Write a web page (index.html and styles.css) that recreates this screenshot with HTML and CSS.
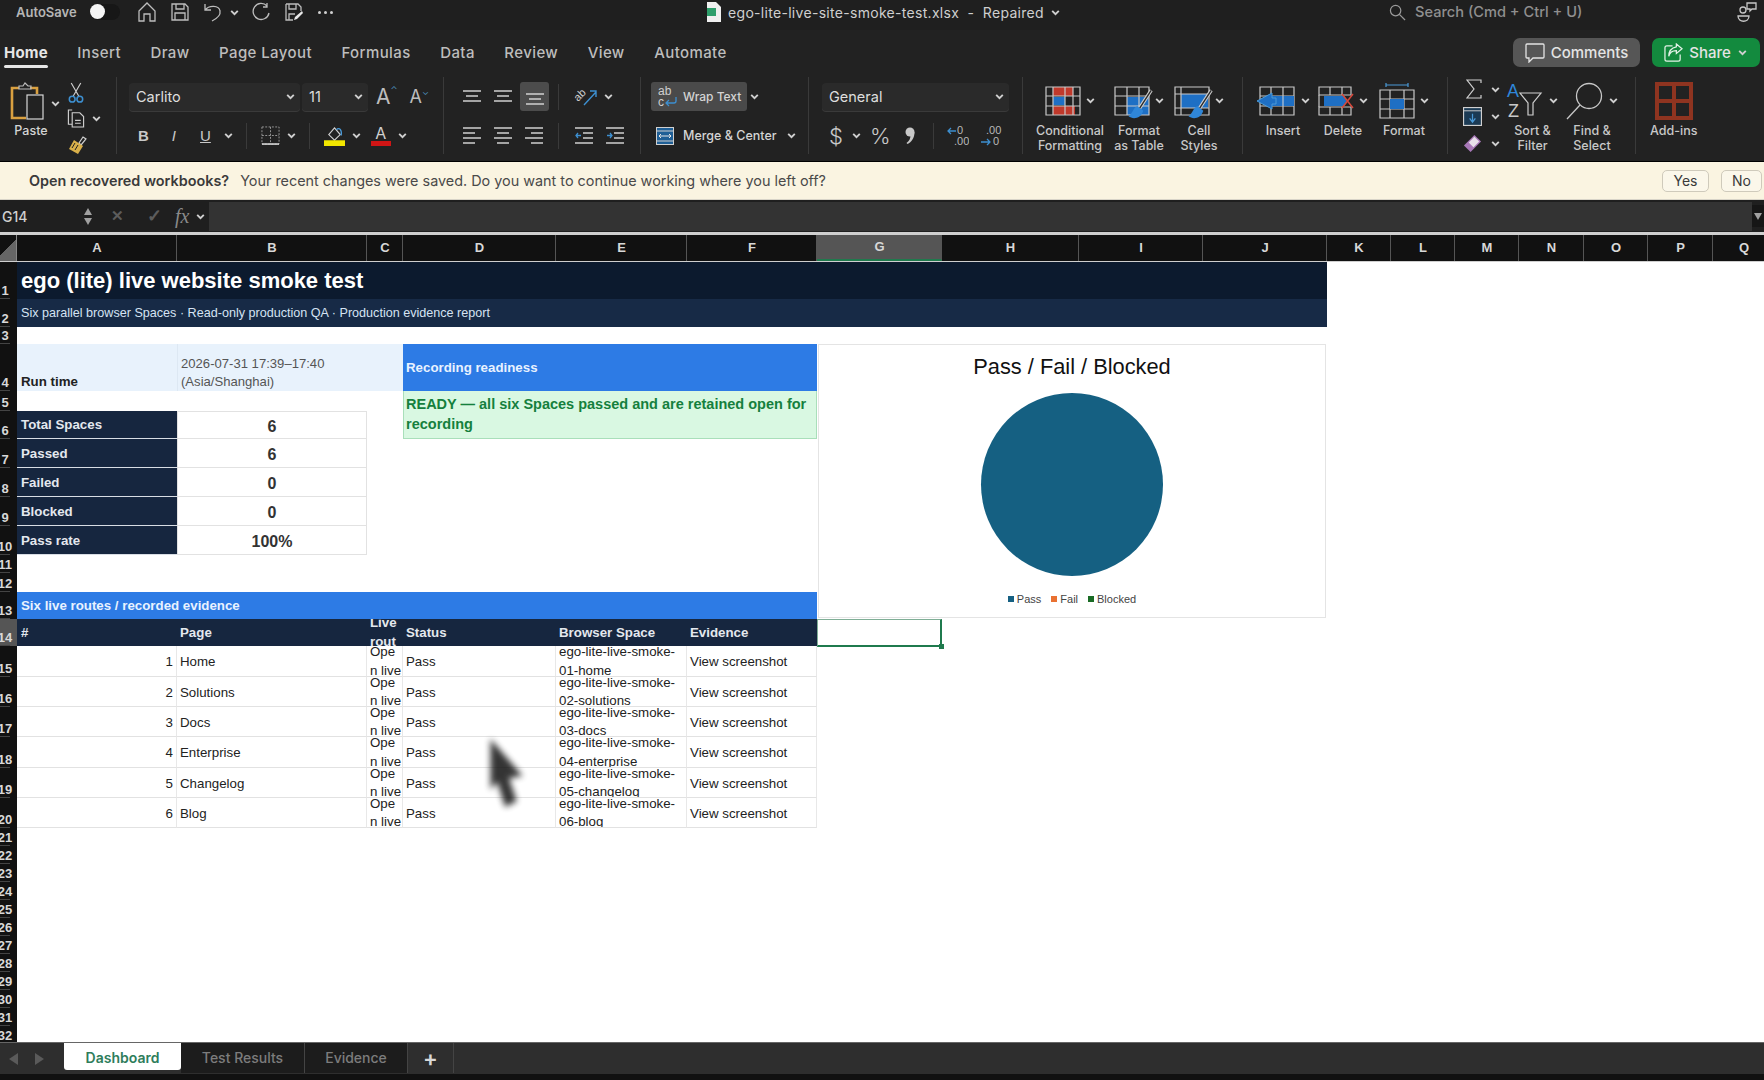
FILE: index.html
```html
<!DOCTYPE html>
<html>
<head>
    <title>ego-lite-live-site-smoke-test.xlsx</title>
    <link rel="stylesheet" href="styles.css">
</head>
<body>

    <svg class="sprite">
        <symbol id="chev" viewBox="0 0 10 10"><path d="M2 3.5 5 6.5 8 3.5" fill="none" stroke="#d0d0d0" stroke-width="1.7"/></symbol>
        <symbol id="lines-top" viewBox="0 0 18 14"><path d="M0 1h18M3 6h12M0 11h18" fill="none" stroke="#cfcfcf" stroke-width="1.3"/></symbol>
        <symbol id="lines-left" viewBox="0 0 18 18"><path d="M0 1h18M0 6h12M0 11h18M0 16h12" fill="none" stroke="#cfcfcf" stroke-width="1.3"/></symbol>
        <symbol id="lines-mid" viewBox="0 0 18 18"><path d="M0 1h18M3 6h12M0 11h18M3 16h12" fill="none" stroke="#cfcfcf" stroke-width="1.3"/></symbol>
        <symbol id="lines-right" viewBox="0 0 18 18"><path d="M0 1h18M6 6h12M0 11h18M6 16h12" fill="none" stroke="#cfcfcf" stroke-width="1.3"/></symbol>
        <symbol id="brush" viewBox="0 0 22 30"><path d="M20 2 9 19" fill="none" stroke="#cfcfcf" stroke-width="3"/><path d="M20 2 9 19" fill="none" stroke="#2a2a2a" stroke-width="1.2"/><path d="M8 16c-4 1-4 6-8 9 4 3 11 2 13-5z" fill="#2f86d8"/></symbol>
    </svg>

    <!-- Barra de titulo -->
    <div id="titlebar">
        <div class="tb-left">
            <span class="autosave">AutoSave</span>
            <span class="toggle"><i></i></span>
            <svg class="qa" viewBox="0 0 18 20"><path d="M1 9 9 1l8 8v10h-5v-7H6v7H1z" fill="none" stroke="#bdbdbd" stroke-width="1.3"/></svg>
            <svg class="qa" viewBox="0 0 18 20"><path d="M1 2h13l3 3v13H1zM5 2v5h8V2M4 18v-7h10v7" fill="none" stroke="#bdbdbd" stroke-width="1.3"/></svg>
            <svg class="qa" viewBox="0 0 18 20"><path d="M1 2v6h6M1 8c4-5 14-5 15 1 1 5-4 8-8 10" fill="none" stroke="#bdbdbd" stroke-width="1.3"/></svg>
            <svg class="chev tight"><use href="#chev"/></svg>
            <svg class="qa" viewBox="0 0 18 20"><path d="M15 4A8 8 0 1 0 17 11M15 1v4h-4" fill="none" stroke="#bdbdbd" stroke-width="1.3"/></svg>
            <svg class="qa" viewBox="0 0 18 20"><path d="M1 2h12l3 3v4M8 18H1V2M4 2v5h7V2M4 18v-6h6" fill="none" stroke="#bdbdbd" stroke-width="1.3"/><path d="m9 18 1-3 7-6 1 2-6 6z" fill="#e8e8e8"/></svg>
            <span class="dots"><i></i><i></i><i></i></span>
        </div>
        <div class="doc-title">
            <svg viewBox="0 0 16 20"><path d="M1 0h9l5 5v15H1z" fill="#efefef"/><rect x="1" y="6" width="9" height="8" fill="#2e9e6b"/></svg>
            <span>ego-lite-live-site-smoke-test.xlsx&nbsp; - &nbsp;Repaired</span>
            <svg class="chev"><use href="#chev"/></svg>
        </div>
        <div class="tb-right">
            <div class="search">
                <svg viewBox="0 0 18 18"><circle cx="7" cy="7" r="5.5" fill="none" stroke="#9a9a9a" stroke-width="1.3"/><path d="m11 11 6 6" stroke="#9a9a9a" stroke-width="1.3"/></svg>
                <span>Search (Cmd + Ctrl + U)</span>
            </div>
            <svg class="people" viewBox="0 0 20 22"><circle cx="6" cy="9" r="3" fill="none" stroke="#c8c8c8" stroke-width="1.3"/><path d="M1 15h11c0 7-11 7-11 0z" fill="none" stroke="#c8c8c8" stroke-width="1.3"/><path d="M10 2h9v6h-4l-2 2V8h-3z" fill="none" stroke="#c8c8c8" stroke-width="1.3"/></svg>
        </div>
    </div>

    <!-- Pestañas -->
    <div id="tabs">
        <ul>
            <li class="active">Home</li>
            <li>Insert</li>
            <li>Draw</li>
            <li>Page Layout</li>
            <li>Formulas</li>
            <li>Data</li>
            <li>Review</li>
            <li>View</li>
            <li>Automate</li>
        </ul>
        <div class="tab-actions">
            <button class="btn-comments">
                <svg viewBox="0 0 20 20"><path d="M2 1h16a1 1 0 0 1 1 1v12a1 1 0 0 1-1 1H8l-4 4v-4H2a1 1 0 0 1-1-1V2a1 1 0 0 1 1-1z" fill="none" stroke="#e4e4e4" stroke-width="1.3"/></svg>
                Comments
            </button>
            <button class="btn-share">
                <svg viewBox="0 0 20 20"><path d="M9 3H3a2 2 0 0 0-2 2v12a2 2 0 0 0 2 2h12a2 2 0 0 0 2-2v-5" fill="none" stroke="#e4f2e8" stroke-width="1.3"/><path d="M13 1l6 5-6 5V8C9 8 6 10 5 14c0-6 3-9 8-10z" fill="none" stroke="#e4f2e8" stroke-width="1.3"/></svg>
                Share
                <svg class="chev"><use href="#chev"/></svg>
            </button>
        </div>
    </div>

    <!-- Cinta -->
    <div id="ribbon">
        <div class="grp g-clip">
            <div class="paste">
                <svg viewBox="0 0 34 38"><path d="M9 6H2v30h14" fill="none" stroke="#d9a040" stroke-width="2.6"/><path d="M20 6h7v6" fill="none" stroke="#d9a040" stroke-width="2.6"/><path d="M9 7V4h4l2-3 3 3h3v3z" fill="none" stroke="#bdbdbd" stroke-width="1.2"/><rect x="17" y="13" width="16" height="24" fill="#222" stroke="#d8d8d8" stroke-width="1.2"/></svg>
                <span>Paste</span>
            </div>
            <svg class="chev paste-chev"><use href="#chev"/></svg>
            <div class="clip-col">
                <svg class="ic-cut" viewBox="0 0 16 22"><path d="M3 1l8 14M13 1 5 15" stroke="#cfcfcf" stroke-width="1.2"/><circle cx="4" cy="18" r="3" fill="none" stroke="#3d8fd0" stroke-width="1.6"/><circle cx="12" cy="18" r="3" fill="none" stroke="#3d8fd0" stroke-width="1.6"/></svg>
                <div class="copy-row">
                    <svg class="ic-copy" viewBox="0 0 18 20"><path d="M5 1H1v15h4M5 4h8l4 4v11H5zM8 12h6M8 15h6" fill="none" stroke="#d0d0d0" stroke-width="1.2"/></svg>
                    <svg class="chev"><use href="#chev"/></svg>
                </div>
                <svg class="ic-brush" viewBox="0 0 20 20"><path d="M12 8l4-6 3 2-5 6z" fill="none" stroke="#d0d0d0" stroke-width="1.2"/><path d="M7 5l9 6-5 8-9-5z" fill="#d9b04a"/><path d="M8 8 5 13M11 10l-3 5" stroke="#222" stroke-width="1"/></svg>
            </div>
        </div>

        <div class="grp g-font">
            <div class="rw">
                <div class="select font-select">Carlito<svg class="chev"><use href="#chev"/></svg></div>
                <div class="select size-select">11<svg class="chev"><use href="#chev"/></svg></div>
                <span class="grow-a">A<sup>⌃</sup></span>
                <span class="shrink-a">A<sup>⌄</sup></span>
            </div>
            <div class="rw fmt-row">
                <b class="f-b">B</b>
                <i class="f-i">I</i>
                <u class="f-u">U</u>
                <svg class="chev u-chev"><use href="#chev"/></svg>
                <span class="mini-sep"></span>
                <svg class="ic-border" viewBox="0 0 20 20"><path d="M1 1h18v18H1z" fill="none" stroke="#999" stroke-width="1" stroke-dasharray="2 1.5"/><path d="M10 1v18M1 10h18" stroke="#999" stroke-width="1" stroke-dasharray="2 1.5"/><path d="M1 19h18" stroke="#ddd" stroke-width="1.6"/></svg>
                <svg class="chev"><use href="#chev"/></svg>
                <span class="mini-sep"></span>
                <svg class="ic-fill" viewBox="0 0 22 22"><path d="M5 10l6-7 6 7-6 6z" fill="none" stroke="#d0d0d0" stroke-width="1.2"/><path d="M13 5c3-3 6 0 5 6" fill="none" stroke="#4a9ad8" stroke-width="1.4"/><rect y="16" width="22" height="6" fill="#f2e600"/></svg>
                <svg class="chev"><use href="#chev"/></svg>
                <span class="ic-color">A</span>
                <svg class="chev"><use href="#chev"/></svg>
            </div>
        </div>

        <div class="grp g-align">
            <div class="rw">
                <svg class="al"><use href="#lines-top"/></svg>
                <svg class="al al-m"><use href="#lines-top"/></svg>
                <span class="al-active"><svg class="al"><use href="#lines-top"/></svg></span>
                <span class="mini-sep"></span>
                <svg class="ic-orient" viewBox="0 0 24 20"><text x="1" y="12" transform="rotate(-45 6 10)" font-family="Liberation Sans" font-size="11" fill="#d0d0d0">ab</text><path d="M10 18 22 5M16 4h6v6" fill="none" stroke="#3d8fd0" stroke-width="1.4"/></svg>
                <svg class="chev"><use href="#chev"/></svg>
            </div>
            <div class="rw">
                <svg class="al"><use href="#lines-left"/></svg>
                <svg class="al al-m"><use href="#lines-mid"/></svg>
                <svg class="al al-r"><use href="#lines-right"/></svg>
                <span class="mini-sep sep-b"></span>
                <svg class="al ind" viewBox="0 0 18 18"><path d="M0 1h18M8 6h10M8 11h10M0 16h18" fill="none" stroke="#cfcfcf" stroke-width="1.3"/><path d="M6 8.500H1M3 6 1 8.500 3 11" fill="none" stroke="#3d8fd0" stroke-width="1.3"/></svg>
                <svg class="al ind2" viewBox="0 0 18 18"><path d="M0 1h18M8 6h10M8 11h10M0 16h18" fill="none" stroke="#cfcfcf" stroke-width="1.3"/><path d="M1 8.500h5M4 6l2 2.500L4 11" fill="none" stroke="#3d8fd0" stroke-width="1.3"/></svg>
            </div>
        </div>

        <div class="grp g-wrap">
            <div class="rw">
                <span class="wrap-btn">
                    <svg class="ic-wrap" viewBox="0 0 20 22"><text x="0" y="9" font-family="Liberation Sans" font-size="12" fill="#cfcfcf">ab</text><text x="0" y="20" font-family="Liberation Sans" font-size="12" fill="#cfcfcf">c</text><path d="M18 11v4a2 2 0 0 1-2 2H8M11 14l-3 3 3 3" fill="none" stroke="#3d8fd0" stroke-width="1.3"/></svg>
                    Wrap Text
                </span>
                <svg class="chev"><use href="#chev"/></svg>
            </div>
            <div class="rw merge-row">
                <svg class="ic-merge" viewBox="0 0 18 18"><rect x=".5" y=".5" width="17" height="17" fill="#1f5f96" stroke="#d0d0d0"/><path d="M3 9h12M5 7 3 9l2 2M13 7l2 2-2 2" fill="none" stroke="#e8e8e8"/><path d="M0 4h18M0 14h18" stroke="#d0d0d0"/></svg>
                Merge &amp; Center
                <svg class="chev"><use href="#chev"/></svg>
            </div>
        </div>

        <div class="grp g-num">
            <div class="rw">
                <div class="select num-select">General<svg class="chev"><use href="#chev"/></svg></div>
            </div>
            <div class="rw num-row">
                <span class="n-dollar">$</span>
                <svg class="chev"><use href="#chev"/></svg>
                <span class="n-pct">%</span>
                <svg class="n-comma" viewBox="0 0 10 18"><circle cx="5" cy="5" r="4.500" fill="#c8c8c8"/><path d="M9.500 5c0 6-3 10-7 12l-1-1c3-2 4-5 4-8z" fill="#c8c8c8"/></svg>
                <span class="mini-sep"></span>
                <svg class="dec" viewBox="0 0 22 22"><text x="10" y="9" font-family="Liberation Sans" font-size="11" fill="#b8b8b8">0</text><text x="7" y="20" font-family="Liberation Sans" font-size="11" fill="#b8b8b8">.00</text><path d="M9 6H1M4 3 1 6l3 3" fill="none" stroke="#3d8fd0" stroke-width="1.3"/></svg>
                <svg class="dec" viewBox="0 0 22 22"><text x="6" y="9" font-family="Liberation Sans" font-size="11" fill="#b8b8b8">.00</text><text x="13" y="20" font-family="Liberation Sans" font-size="11" fill="#b8b8b8">0</text><path d="M1 17h9M7 14l3 3-3 3" fill="none" stroke="#3d8fd0" stroke-width="1.3"/></svg>
            </div>
        </div>

        <div class="grp g-big g-styles">
            <div class="big b-cf">
                <div class="big-top">
                    <svg viewBox="0 0 36 30"><rect width="36" height="30" fill="none"/><path d="M8 1h20v9H8zM8 20h22v9H8z" fill="#c0392b"/><rect x="8" y="11" width="12" height="8" fill="#1e6fc4"/><path d="M1 1h34v28H1zM1 10h34M1 20h34M8 1v28M20 1v28M28 1v28" fill="none" stroke="#c8c8c8" stroke-width="1.2"/></svg>
                    <svg class="chev"><use href="#chev"/></svg>
                </div>
                <span>Conditional<br>Formatting</span>
            </div>
            <div class="big b-table">
                <div class="big-top">
                    <span class="brushed">
                        <svg viewBox="0 0 36 30"><rect x="13" y="11" width="22" height="18" fill="#1e6fc4"/><path d="M1 1h34v28H1zM1 10h34M1 20h34M13 1v28M25 1v28" fill="none" stroke="#c8c8c8" stroke-width="1.2"/></svg>
                        <svg class="over-brush"><use href="#brush"/></svg>
                    </span>
                    <svg class="chev"><use href="#chev"/></svg>
                </div>
                <span>Format<br>as Table</span>
            </div>
            <div class="big b-cell">
                <div class="big-top">
                    <span class="brushed">
                        <svg viewBox="0 0 36 30"><rect x="7" y="8" width="27" height="14" fill="#1e6fc4"/><path d="M1 1h34v28H1zM1 8h34M1 22h34M7 1v28" fill="none" stroke="#c8c8c8" stroke-width="1.2"/></svg>
                        <svg class="over-brush"><use href="#brush"/></svg>
                    </span>
                    <svg class="chev"><use href="#chev"/></svg>
                </div>
                <span>Cell<br>Styles</span>
            </div>
        </div>

        <div class="grp g-big g-cells">
            <div class="big b-ins">
                <div class="big-top">
                    <svg viewBox="0 0 40 30"><path d="M4 1h34v28H4zM15 1v28M27 1v28M4 10h34M4 20h34" fill="none" stroke="#c8c8c8" stroke-width="1.2"/><rect x="10" y="10" width="28" height="10" fill="#1e6fc4"/><path d="M15 10v10M27 10v10" stroke="#d8d8d8"/><path d="M16 7 1 15l15 8v-5h4v-6h-4z" fill="#1e6fc4" stroke="#4a9ad8"/></svg>
                    <svg class="chev"><use href="#chev"/></svg>
                </div>
                <span>Insert</span>
            </div>
            <div class="big b-del">
                <div class="big-top">
                    <svg viewBox="0 0 36 30"><path d="M1 1h32v8H1zM1 21h32v8H1zM12 1v8M24 1v8M12 21v8M24 21v8" fill="none" stroke="#c8c8c8" stroke-width="1.2"/><path d="M1 9v12" stroke="#c8c8c8" stroke-width="1.2"/><path d="M6 10h20l3 5-3 5H6z" fill="#1e6fc4"/><path d="M24 8 35 22M35 8 24 22" stroke="#d9483b" stroke-width="1.5"/></svg>
                    <svg class="chev"><use href="#chev"/></svg>
                </div>
                <span>Delete</span>
            </div>
            <div class="big b-fmt">
                <div class="big-top">
                    <svg viewBox="0 0 36 36"><path d="M7 2h22M7 0v4M29 0v4" stroke="#4a9ad8" stroke-width="1.2"/><path d="M1 7h34v28H1zM1 16h34M1 26h34M11 7v28M25 7v28" fill="none" stroke="#c8c8c8" stroke-width="1.2"/><rect x="11" y="16" width="14" height="10" fill="#1e6fc4"/></svg>
                    <svg class="chev"><use href="#chev"/></svg>
                </div>
                <span>Format</span>
            </div>
        </div>

        <div class="grp g-big g-edit">
            <div class="edit-col">
                <div class="edit-row">
                    <svg class="ic-sigma" viewBox="0 0 16 20"><path d="M15 4V1H1l7 9-7 9h14v-3" fill="none" stroke="#d0d0d0" stroke-width="1.2"/></svg>
                    <svg class="chev"><use href="#chev"/></svg>
                </div>
                <div class="edit-row">
                    <svg class="ic-down" viewBox="0 0 20 20"><rect x=".6" y=".6" width="18.800" height="18.800" fill="#1b3a54" stroke="#d0d0d0" stroke-width="1.2"/><path d="M0 4h20" stroke="#d0d0d0"/><path d="M10 7v9M7 12l3 4 3-4" fill="none" stroke="#4a9ad8" stroke-width="1.3"/></svg>
                    <svg class="chev"><use href="#chev"/></svg>
                </div>
                <div class="edit-row">
                    <svg class="ic-erase" viewBox="0 0 20 20"><path d="M12 1l7 7-11 11-7-7z" fill="#a878b8"/><path d="M12 3l5 5-6 6-5-5z" fill="#e8e0ea"/></svg>
                    <svg class="chev"><use href="#chev"/></svg>
                </div>
            </div>
            <div class="big b-sort">
                <div class="big-top">
                    <svg viewBox="0 0 36 38"><text x="0" y="15" font-family="Liberation Sans" font-size="18" fill="#2f86d8">A</text><text x="1" y="35" font-family="Liberation Sans" font-size="18" fill="#c8c8c8">Z</text><path d="M13 11h21l-8 10v12h-5V21z" fill="none" stroke="#d0d0d0" stroke-width="1.2"/></svg>
                    <svg class="chev"><use href="#chev"/></svg>
                </div>
                <span>Sort &amp;<br>Filter</span>
            </div>
            <div class="big b-find">
                <div class="big-top">
                    <svg viewBox="0 0 38 38"><circle cx="23" cy="14" r="12.500" fill="none" stroke="#c8c8c8" stroke-width="1.3"/><path d="M14 23 1 37" stroke="#c8c8c8" stroke-width="1.3"/></svg>
                    <svg class="chev"><use href="#chev"/></svg>
                </div>
                <span>Find &amp;<br>Select</span>
            </div>
        </div>

        <div class="grp g-big g-add">
            <div class="big b-add">
                <div class="big-top">
                    <svg viewBox="0 0 38 38"><path d="M2 2h34v34H2zM2 19h34M19 2v34" fill="none" stroke="#8f3420" stroke-width="4"/></svg>
                </div>
                <span>Add-ins</span>
            </div>
        </div>
    </div>

    <!-- Aviso -->
    <div id="notice">
        <strong>Open recovered workbooks?</strong>
        <span>Your recent changes were saved. Do you want to continue working where you left off?</span>
        <div class="notice-btns">
            <button>Yes</button>
            <button>No</button>
        </div>
    </div>

    <!-- Barra de formulas -->
    <div id="formula">
        <div class="namebox">G14</div>
        <div class="stepper"><i class="up"></i><i class="down"></i></div>
        <span class="f-x">✕</span>
        <span class="f-ok">✓</span>
        <span class="f-fx">fx</span>
        <svg class="chev"><use href="#chev"/></svg>
        <div class="f-input"></div>
        <div class="f-drop"><i class="down"></i></div>
    </div>

    <!-- Hoja -->
    <div id="sheet">
        <div class="colhead">
            <div class="corner"></div>
            <div>A</div><div>B</div><div>C</div><div>D</div><div>E</div><div>F</div>
            <div class="sel">G</div>
            <div>H</div><div>I</div><div>J</div><div>K</div><div>L</div><div>M</div><div>N</div><div>O</div><div>P</div><div>Q</div>
        </div>
        <div class="sheet-body">
            <div class="rowhead">
                <div>1</div><div>2</div><div>3</div><div>4</div><div>5</div><div>6</div><div>7</div><div>8</div>
                <div>9</div><div>10</div><div>11</div><div>12</div><div>13</div><div class="sel">14</div><div>15</div><div>16</div>
                <div>17</div><div>18</div><div>19</div><div>20</div><div>21</div><div>22</div><div>23</div><div>24</div>
                <div>25</div><div>26</div><div>27</div><div>28</div><div>29</div><div>30</div><div>31</div><div>32</div>
            </div>
            <div class="cells">
                <div class="c title">ego (lite) live website smoke test</div>
                <div class="c subtitle">Six parallel browser Spaces · Read-only production QA · Production evidence report</div>

                <div class="c run-label r4 ca">Run time</div>
                <div class="c run-value r4 cb">2026-07-31 17:39–17:40<br>(Asia/Shanghai)</div>
                <div class="c run-fill r4 cc"></div>
                <div class="c ready-head r4">Recording readiness</div>
                <div class="c ready-body">READY — all six Spaces passed and are retained open for recording</div>

                <div class="c kpi-label r6 ca">Total Spaces</div><div class="c kpi r6 cb">6</div>
                <div class="c kpi-label r7 ca">Passed</div><div class="c kpi r7 cb">6</div>
                <div class="c kpi-label r8 ca">Failed</div><div class="c kpi r8 cb">0</div>
                <div class="c kpi-label r9 ca">Blocked</div><div class="c kpi r9 cb">0</div>
                <div class="c kpi-label r10 ca">Pass rate</div><div class="c kpi r10 cb">100%</div>

                <div class="c band">Six live routes / recorded evidence</div>

                <div class="c th r14 ca">#</div>
                <div class="c th r14 cb">Page</div>
                <div class="c th wrap r14 cc">Live<br>rout</div>
                <div class="c th r14 cd">Status</div>
                <div class="c th r14 ce">Browser Space</div>
                <div class="c th r14 cf">Evidence</div>

                <div class="c td num r15 ca">1</div><div class="c td r15 cb">Home</div><div class="c td wrap r15 cc">Ope<br>n live</div><div class="c td r15 cd">Pass</div><div class="c td wrap r15 ce">ego-lite-live-smoke-<br>01-home</div><div class="c td r15 cf">View screenshot</div>
                <div class="c td num r16 ca">2</div><div class="c td r16 cb">Solutions</div><div class="c td wrap r16 cc">Ope<br>n live</div><div class="c td r16 cd">Pass</div><div class="c td wrap r16 ce">ego-lite-live-smoke-<br>02-solutions</div><div class="c td r16 cf">View screenshot</div>
                <div class="c td num r17 ca">3</div><div class="c td r17 cb">Docs</div><div class="c td wrap r17 cc">Ope<br>n live</div><div class="c td r17 cd">Pass</div><div class="c td wrap r17 ce">ego-lite-live-smoke-<br>03-docs</div><div class="c td r17 cf">View screenshot</div>
                <div class="c td num r18 ca">4</div><div class="c td r18 cb">Enterprise</div><div class="c td wrap r18 cc">Ope<br>n live</div><div class="c td r18 cd">Pass</div><div class="c td wrap r18 ce">ego-lite-live-smoke-<br>04-enterprise</div><div class="c td r18 cf">View screenshot</div>
                <div class="c td num r19 ca">5</div><div class="c td r19 cb">Changelog</div><div class="c td wrap r19 cc">Ope<br>n live</div><div class="c td r19 cd">Pass</div><div class="c td wrap r19 ce">ego-lite-live-smoke-<br>05-changelog</div><div class="c td r19 cf">View screenshot</div>
                <div class="c td num r20 ca">6</div><div class="c td r20 cb">Blog</div><div class="c td wrap r20 cc">Ope<br>n live</div><div class="c td r20 cd">Pass</div><div class="c td wrap r20 ce">ego-lite-live-smoke-<br>06-blog</div><div class="c td r20 cf">View screenshot</div>

                <!-- Grafico flotante -->
                <div class="chart">
                    <div class="chart-title">Pass / Fail / Blocked</div>
                    <div class="pie"></div>
                    <div class="legend">
                        <span><i class="k-pass"></i>Pass</span>
                        <span><i class="k-fail"></i>Fail</span>
                        <span><i class="k-blocked"></i>Blocked</span>
                    </div>
                </div>

                <div class="selection"><i></i></div>

                <svg class="cursor" viewBox="0 0 40 76"><path d="M3 2 36 40 22 42 30 66 18 72 10 46 3 54z" fill="#111"/></svg>
            </div>
        </div>
    </div>

    <!-- Hojas -->
    <div id="sheettabs">
        <div class="nav"><i class="prev"></i><i class="next"></i></div>
        <div class="stab on">Dashboard</div>
        <div class="stab t-results">Test Results</div>
        <div class="stab t-evidence">Evidence</div>
        <div class="stab-add">+</div>
    </div>
    <div id="bottom"></div>

</body>
</html>
```

FILE: styles.css
```css
/* Base */
html, body {
    margin: 0;
    padding: 0;
    height: 1080px;
    overflow: hidden;
    background-color: #fff;
    font-family: "Liberation Sans", Arial, sans-serif;
}

.sprite {
    display: none;
}

svg {
    display: block;
    flex: none;
}

.chev {
    width: 11px;
    height: 11px;
}

/* Barra de titulo */
#titlebar {
    height: 30px;
    background-color: #1f1f1f;
    color: #cfcfcf;
    display: grid;
    grid-template-columns: 1fr auto 1fr;
    align-items: center;
    font-family: Inter, sans-serif;
    font-size: 13px;
    padding-bottom: 6px;
    box-sizing: border-box;
}

.tb-left {
    display: flex;
    align-items: center;
    padding-left: 16px;
}

.autosave {
    font-weight: 600;
    color: #b5b5b5;
    width: 74px;
}

.toggle {
    width: 30px;
    height: 16px;
    margin-right: 18px;
    border-radius: 8px;
    background-color: #171717;
}

.toggle i {
    display: block;
    width: 15px;
    height: 15px;
    border-radius: 50%;
    background-color: #f5f5f5;
}

.qa {
    width: 18px;
    height: 20px;
    margin-right: 15px;
}

.chev.tight {
    margin-left: -8px;
    margin-right: 12px;
}

.dots {
    display: flex;
    gap: 3px;
}

.dots i {
    width: 3px;
    height: 3px;
    border-radius: 50%;
    background-color: #d0d0d0;
}

.doc-title {
    display: flex;
    align-items: center;
    gap: 6px;
    padding-left: 3px;
    font-size: 14px;
    letter-spacing: .3px;
}

.doc-title svg:first-child {
    width: 16px;
    height: 20px;
}

.tb-right {
    display: flex;
    align-items: center;
    justify-content: flex-end;
    padding-right: 7px;
}

.search {
    display: flex;
    align-items: center;
    gap: 9px;
    width: 348px;
    color: #8f8f8f;
    font-size: 14.6px;
    font-weight: 500;
}

.search svg {
    width: 17px;
    height: 17px;
}

.people {
    width: 20px;
    height: 22px;
}

/* Pestañas */
#tabs {
    height: 45px;
    background-color: #222;
    display: flex;
    align-items: center;
    justify-content: space-between;
    font-family: Inter, sans-serif;
}

#tabs ul {
    list-style: none;
    display: flex;
    gap: 29.500px;
    margin: 0;
    padding: 0 0 0 4px;
    color: #bdbdbd;
    font-size: 15px;
    font-weight: 500;
    letter-spacing: .4px;
}

#tabs li {
    position: relative;
}

#tabs li.active {
    color: #e6e6e6;
    font-weight: 700;
    letter-spacing: .2px;
}

#tabs li.active::after {
    content: "";
    position: absolute;
    left: 0;
    right: 0;
    bottom: -6px;
    height: 3px;
    border-radius: 2px;
    background-color: #e6e6e6;
}

.tab-actions {
    display: flex;
    gap: 12px;
    padding-right: 4px;
}

.tab-actions button {
    height: 29px;
    border: none;
    border-radius: 7px;
    color: #e4e4e4;
    display: flex;
    align-items: center;
    font-family: inherit;
    font-size: 15px;
    font-weight: 500;
    padding: 0;
}

.btn-comments {
    width: 127px;
    background-color: #565656;
    gap: 6px;
    justify-content: center;
}

.btn-comments svg {
    width: 20px;
    height: 20px;
}

.btn-share {
    width: 108px;
    background-color: #138a3e;
    gap: 6px;
    justify-content: center;
}

.btn-share svg:first-child {
    width: 19px;
    height: 19px;
}

/* Cinta */
#ribbon {
    height: 87px;
    background-color: #222;
    display: flex;
    color: #d4d4d4;
    font-family: Inter, sans-serif;
    font-size: 12.5px;
    border-bottom: 1px solid #000;
    box-sizing: border-box;
}

.grp {
    height: 77px;
    margin-top: 2px;
    padding-top: 5px;
    box-sizing: border-box;
    border-right: 1px solid #3a3a3a;
}

.rw {
    height: 29px;
    display: flex;
    align-items: center;
    margin-bottom: 10px;
    position: relative;
}

.mini-sep {
    width: 1px;
    height: 26px;
    background-color: #3a3a3a;
}

.select {
    height: 28px;
    border-radius: 4px;
    background-color: #2a2a2a;
    box-shadow: 0 1px 0 #3a3a3a;
    display: flex;
    align-items: center;
    justify-content: space-between;
    box-sizing: border-box;
    padding: 0 4px 0 7px;
    font-size: 14.5px;
    color: #dedede;
}

/* Portapapeles */
.g-clip {
    width: 117px;
    display: flex;
    padding-left: 10px;
}

.paste {
    width: 42px;
    text-align: center;
}

.paste svg {
    width: 34px;
    height: 38px;
}

.paste span {
    display: block;
    margin-top: 3px;
    font-size: 12.5px;
    font-weight: 500;
}

.paste-chev {
    margin-top: 16px;
    margin-left: -2px;
}

.clip-col {
    margin-left: 6px;
}

.ic-cut {
    width: 16px;
    height: 21px;
    margin: 0 0 6px 1px;
}

.copy-row {
    display: flex;
    align-items: center;
    gap: 6px;
    margin-bottom: 7px;
}

.ic-copy {
    width: 18px;
    height: 19px;
}

.ic-brush {
    width: 20px;
    height: 20px;
}

/* Fuente */
.g-font {
    width: 327px;
    padding-left: 12px;
}

.font-select {
    width: 171px;
}

.size-select {
    width: 66px;
    margin-left: 2px;
}

.grow-a, .shrink-a {
    font-size: 21px;
    color: #bdbdbd;
    display: flex;
}

.grow-a {
    margin-left: 8px;
}

.shrink-a {
    margin-left: 12px;
    font-size: 18px;
}

.grow-a sup, .shrink-a sup {
    font-size: 9px;
    line-height: 12px;
    color: #4a8bb8;
}

.fmt-row > b, .fmt-row > i, .fmt-row > u {
    font-size: 15px;
    font-family: "Liberation Sans", Arial, sans-serif;
    color: #c8c8c8;
}

.f-b {
    margin-left: 9px;
}

.f-i {
    margin-left: 23px;
}

.f-u {
    margin-left: 24px;
}

.fmt-row .chev {
    margin-left: 6px;
}

.fmt-row .u-chev {
    margin-left: 12px;
}

.fmt-row .mini-sep {
    margin: 0 14px 0 12px;
}

.ic-border {
    width: 19px;
    height: 19px;
}

.ic-fill {
    width: 21px;
    height: 21px;
}

.ic-color {
    color: #d0d0d0;
    font-size: 16px;
    line-height: 15px;
    width: 20px;
    text-align: center;
    border-bottom: 5px solid #d01515;
    margin-left: 9px;
}

/* Alineacion */
.g-align {
    width: 197px;
    padding-left: 19px;
}

.al {
    width: 18px;
    height: 18px;
}

.al-m {
    margin-left: 13px;
}

.al-r {
    margin-left: 13px;
}

.al-active {
    width: 29px;
    height: 29px;
    margin-left: 8px;
    border-radius: 3px;
    background-color: #4c4c4c;
    display: flex;
    align-items: flex-end;
    justify-content: center;
    padding-bottom: 2px;
    box-sizing: border-box;
}

.g-align .mini-sep {
    margin: 0 15px 0 9px;
}

.g-align .sep-b {
    margin-left: 15px;
}

.ic-orient {
    width: 24px;
    height: 20px;
    margin-right: 5px;
}

.ind {
    margin-left: 1px;
}

.ind2 {
    margin-left: 13px;
}

/* Ajuste de texto */
.g-wrap {
    width: 168px;
    padding-left: 10px;
}

.wrap-btn {
    width: 96px;
    height: 29px;
    border-radius: 3px;
    background-color: #4a4a4a;
    display: flex;
    align-items: center;
    gap: 5px;
    padding-left: 7px;
    box-sizing: border-box;
    margin-right: 2px;
    font-weight: 500;
    font-size: 12px;
    white-space: nowrap;
}

.ic-wrap {
    width: 20px;
    height: 22px;
}

.merge-row {
    padding-left: 5px;
    gap: 9px;
    font-weight: 500;
    font-size: 12.5px;
}

.ic-merge {
    width: 18px;
    height: 18px;
}

/* Numero */
.g-num {
    width: 214px;
    padding-left: 13px;
}

.num-select {
    width: 187px;
}

.n-dollar {
    font-size: 22px;
    margin-left: 7px;
    color: #c8c8c8;
    font-weight: 300;
}

.num-row .chev {
    margin-left: 8px;
}

.n-pct {
    font-size: 22px;
    margin-left: 8px;
    color: #c8c8c8;
    font-weight: 300;
}

.n-comma {
    width: 10px;
    height: 18px;
    margin-left: 14px;
}

.num-row .mini-sep {
    margin: 0 13px 0 18px;
}

.dec {
    width: 22px;
    height: 22px;
    margin-right: 11px;
}

/* Botones grandes */
.g-big {
    display: flex;
    padding-top: 2px;
}

.big {
    text-align: center;
    font-size: 12.5px;
    line-height: 14.500px;
    font-weight: 500;
    color: #c8c8c8;
}

.big-top {
    height: 43px;
    display: flex;
    align-items: center;
    justify-content: center;
    gap: 4px;
    margin-bottom: 2px;
}

.big-top svg:first-child {
    width: 36px;
    height: 30px;
}

.g-styles {
    width: 220px;
    padding-left: 9px;
}

.b-cf {
    width: 76px;
}

.b-table {
    width: 62px;
}

.b-cell {
    width: 58px;
}

.brushed {
    position: relative;
    width: 36px;
    height: 30px;
}

.brushed svg:first-child {
    width: 36px;
    height: 30px;
}

.over-brush {
    position: absolute;
    right: -4px;
    bottom: -6px;
    width: 26px;
    height: 34px;
}

.g-cells {
    width: 205px;
    padding-left: 10px;
}

.b-ins {
    width: 60px;
}

.b-del {
    width: 60px;
}

.b-fmt {
    width: 62px;
}

.b-ins .big-top svg:first-child {
    width: 40px;
}

.b-fmt .big-top svg:first-child {
    height: 36px;
}

.g-edit {
    width: 188px;
    padding-left: 15px;
}

.edit-col {
    width: 40px;
    margin-top: -3px;
}

.edit-row {
    height: 26px;
    display: flex;
    align-items: center;
    justify-content: space-between;
    width: 38px;
    margin-bottom: 1px;
}

.ic-sigma {
    width: 16px;
    height: 20px;
    margin-left: 3px;
}

.ic-down {
    width: 19px;
    height: 19px;
}

.ic-erase {
    width: 19px;
    height: 19px;
}

.b-sort {
    width: 59px;
}

.b-sort .big-top svg:first-child,
.b-find .big-top svg:first-child {
    width: 38px;
    height: 38px;
}

.b-find {
    width: 60px;
}

.g-add {
    border-right: none;
    padding-left: 14px;
}

.b-add .big-top svg:first-child {
    width: 38px;
    height: 38px;
}

/* Aviso */
#notice {
    height: 38px;
    background-color: #faf4e1;
    color: #4a4a4a;
    display: flex;
    align-items: center;
    font-family: Inter, sans-serif;
    font-size: 14.4px;
    padding-left: 29px;
    box-sizing: border-box;
    border-bottom: 1px solid #d8d4c8;
}

#notice strong {
    color: #3a3a3a;
    font-weight: 600;
    margin-right: 11px;
}

.notice-btns {
    margin-left: auto;
    display: flex;
    gap: 12px;
    padding-right: 2px;
}

.notice-btns button {
    height: 22px;
    width: 47px;
    background-color: #fbf7ea;
    border: 1px solid #cfcabb;
    border-radius: 5px;
    font-family: inherit;
    font-size: 14px;
    color: #3a3a3a;
    padding: 0;
}

.notice-btns button:last-child {
    width: 41px;
}

/* Barra de formulas */
#formula {
    height: 32px;
    background-color: #1f1f1f;
    border-bottom: 3px solid #cfcfcf;
    box-sizing: content-box;
    display: flex;
    align-items: center;
    color: #5c5c5c;
}

.namebox {
    width: 82px;
    padding-left: 2px;
    box-sizing: border-box;
    color: #d0d0d0;
    font-family: Inter, sans-serif;
    font-size: 14px;
    font-weight: 500;
}

.stepper {
    width: 12px;
    display: flex;
    flex-direction: column;
    gap: 3px;
    align-items: center;
}

.up, .down {
    display: block;
    width: 0;
    height: 0;
    border-left: 4px solid transparent;
    border-right: 4px solid transparent;
}

.up {
    border-bottom: 7px solid #a0a0a0;
}

.down {
    border-top: 7px solid #a0a0a0;
}

.f-x {
    margin-left: 17px;
    font-size: 15px;
    font-weight: bold;
    width: 36px;
}

.f-ok {
    font-size: 18px;
    font-weight: bold;
    width: 28px;
}

.f-fx {
    font-family: "Liberation Serif", serif;
    font-style: italic;
    font-size: 20px;
    color: #8a8a8a;
    width: 20px;
}

#formula .chev {
    margin-right: 3px;
}

.f-input {
    flex: 1;
    height: 29px;
    background-color: #333;
}

.f-drop {
    width: 12px;
    height: 22px;
    background-color: #161616;
    display: flex;
    align-items: center;
    justify-content: center;
}

/* Hoja */
#sheet {
    height: 807px;
    overflow: hidden;
}

.colhead {
    height: 27px;
    display: grid;
    grid-template-columns: 17px 160px 190px 36px 153px 131px 130px 125px 137px 124px 124px 64px 64px 64px 65px 64px 65px 62px;
    background-color: #111;
    border-bottom: 1px solid #cfcfcf;
    box-sizing: border-box;
    color: #d8d8d8;
    font-size: 13px;
    font-weight: bold;
    overflow: hidden;
}

.colhead div {
    display: flex;
    align-items: center;
    justify-content: center;
    padding: 0 0 2px 1px;
    box-sizing: border-box;
    border-right: 1px solid #555;
}

.colhead .corner {
    background: linear-gradient(135deg, #111 50%, #666 50%);
    border-right: 1px solid #888;
}

.colhead .sel {
    background-color: #555;
    border-bottom: 2px solid #1f7a4d;
}

.sheet-body {
    display: flex;
    height: 780px;
}

.rowhead {
    width: 17px;
    flex: none;
    background-color: #111;
    display: grid;
    grid-template-rows: 37px 28px 17px 47px 20px 28px 29px 29px 29px 29px 18px 19px 27px 27px 31px 30px 30px 31px 30px 30px repeat(12, 18px);
    color: #d8d8d8;
    font-size: 13px;
    font-weight: bold;
    overflow: hidden;
}

.rowhead div {
    width: 10px;
    border-bottom: 1px solid #444;
    display: flex;
    align-items: flex-end;
    justify-content: center;
    line-height: 14px;
    box-shadow: 7px 0 0 #111;
}

.rowhead .sel {
    background-color: #555;
    box-shadow: 7px 0 0 #555;
}

.cells {
    position: relative;
    flex: 1;
    display: grid;
    grid-template-columns: 160px 190px 36px 153px 131px 130px 125px 137px 124px 124px 64px 64px 64px 65px 64px 65px 51px;
    grid-template-rows: 37px 28px 17px 47px 20px 28px 29px 29px 29px 29px 18px 19px 27px 27px 31px 30px 30px 31px 30px 30px;
    background-color: #fff;
    font-size: 13.3px;
    color: #222;
    overflow: hidden;
}

.c {
    box-sizing: border-box;
    padding: 0 3px;
    display: flex;
    align-items: center;
    overflow: hidden;
}

.ca { grid-column: 1; padding-left: 4px; }
.cb { grid-column: 2; }
.cc { grid-column: 3; }
.cd { grid-column: 4; }
.ce { grid-column: 5; }
.cf { grid-column: 6; }

.r4 { grid-row: 4; }
.r6 { grid-row: 6; }
.r7 { grid-row: 7; }
.r8 { grid-row: 8; }
.r9 { grid-row: 9; }
.r10 { grid-row: 10; }
.r14 { grid-row: 14; }
.r15 { grid-row: 15; }
.r16 { grid-row: 16; }
.r17 { grid-row: 17; }
.r18 { grid-row: 18; }
.r19 { grid-row: 19; }
.r20 { grid-row: 20; }

.title {
    grid-row: 1;
    grid-column: 1 / 11;
    background-color: #0c1a2e;
    color: #fff;
    font-size: 22px;
    font-weight: bold;
    padding-left: 4px;
}

.subtitle {
    grid-row: 2;
    grid-column: 1 / 11;
    background-color: #172a46;
    color: #d5e3f3;
    font-size: 12.6px;
    padding-left: 4px;
}

.run-label {
    background-color: #e8f2fc;
    font-weight: bold;
    align-items: flex-end;
    padding-bottom: 2px;
}

.run-value {
    background-color: #e8f2fc;
    color: #555;
    display: block;
    font-size: 13.100px;
    line-height: 18px;
    padding-top: 11px;
    border-left: 1px solid #dde8f3;
}

.run-fill {
    background-color: #e8f2fc;
}

.ready-head {
    grid-column: 4 / 7;
    background-color: #2d7be5;
    color: #e8f2ff;
    font-weight: bold;
}

.ready-body {
    grid-row: 5 / 7;
    grid-column: 4 / 7;
    height: 48px;
    background-color: #d9f8e2;
    border: 1px solid #a9dfba;
    border-top: none;
    color: #15803d;
    font-weight: bold;
    line-height: 19.500px;
    align-items: flex-start;
    padding: 4px 3px 0 2px;
    font-size: 14.500px;
}

.kpi-label {
    background-color: #16263f;
    color: #e4e8ee;
    font-weight: bold;
    border-bottom: 1px solid #d8dde4;
}

.kpi {
    justify-content: center;
    font-size: 16px;
    font-weight: bold;
    color: #333;
    padding-top: 3px;
    border: 1px solid #e2e2e2;
    border-top: none;
}

.r6.kpi {
    border-top: 1px solid #e2e2e2;
}

.band {
    grid-row: 13;
    grid-column: 1 / 7;
    padding-left: 4px;
    background-color: #2d7be5;
    color: #e8f2ff;
    font-weight: bold;
}

.th {
    background-color: #16263f;
    color: #e4e8ee;
    font-weight: bold;
}

.td {
    padding-top: 1px;
    border-bottom: 1px solid #e2e2e2;
    border-right: 1px solid #e8e8e8;
}

.wrap {
    line-height: 18.500px;
    white-space: nowrap;
}

.num {
    justify-content: flex-end;
}

/* Grafico */
.chart {
    position: absolute;
    left: 801px;
    top: 82px;
    width: 508px;
    height: 274px;
    box-sizing: border-box;
    background-color: #fff;
    border: 1px solid #e4e4e4;
    display: flex;
    flex-direction: column;
    align-items: center;
}

.chart-title {
    margin-top: 9px;
    height: 39px;
    font-size: 21.800px;
    line-height: 26px;
    color: #111;
}

.pie {
    width: 182px;
    height: 183px;
    border-radius: 50%;
    background-color: #156082;
}

.legend {
    margin-top: 17px;
    display: flex;
    gap: 10px;
    font-size: 11px;
    color: #444;
}

.legend span {
    display: flex;
    align-items: center;
    gap: 3px;
}

.legend i {
    width: 6px;
    height: 6px;
}

.k-pass { background-color: #156082; }
.k-fail { background-color: #e97132; }
.k-blocked { background-color: #196b24; }

.selection {
    position: absolute;
    left: 800px;
    top: 357px;
    width: 125px;
    height: 28px;
    box-sizing: border-box;
    border: 1px solid #7fae96;
    border-right: 2px solid #1f7a4d;
    border-bottom: 2px solid #1f7a4d;
}

.selection i {
    position: absolute;
    right: -4px;
    bottom: -4px;
    width: 5px;
    height: 5px;
    background-color: #1f7a4d;
}

.cursor {
    position: absolute;
    left: 469px;
    top: 475px;
    width: 42px;
    height: 74px;
    filter: blur(3px);
    opacity: .85;
}

/* Hojas */
#sheettabs {
    height: 32px;
    background-color: #2e2e2e;
    border-top: 1px solid #666;
    box-sizing: border-box;
    display: flex;
    color: #7c7c7c;
    font-family: Inter, sans-serif;
    font-size: 14px;
    font-weight: 500;
}

.nav {
    width: 64px;
    display: flex;
    align-items: center;
    gap: 17px;
    padding-left: 9px;
    box-sizing: border-box;
}

.prev, .next {
    display: block;
    width: 0;
    height: 0;
    border-top: 6px solid transparent;
    border-bottom: 6px solid transparent;
}

.prev {
    border-right: 9px solid #5a5a5a;
}

.next {
    border-left: 9px solid #5a5a5a;
}

.stab {
    height: 30px;
    padding-bottom: 2px;
    background-color: #1c1c1c;
    display: flex;
    align-items: center;
    justify-content: center;
    box-sizing: border-box;
    border-right: 1px solid #444;
}

.t-results {
    width: 124px;
}

.t-evidence {
    width: 103px;
}

.stab.on {
    height: 27px;
    width: 117px;
    padding: 1px 0 0;
    background-color: #fff;
    color: #2e7d5b;
    font-weight: 600;
    border-radius: 0 0 3px 3px;
    border: none;
}

.stab-add {
    width: 45px;
    height: 30px;
    display: flex;
    align-items: center;
    justify-content: center;
    border-right: 1px solid #444;
    color: #d8d8d8;
    font-size: 22px;
    font-weight: 600;
}

#bottom {
    height: 6px;
    background-color: #111;
}
```
